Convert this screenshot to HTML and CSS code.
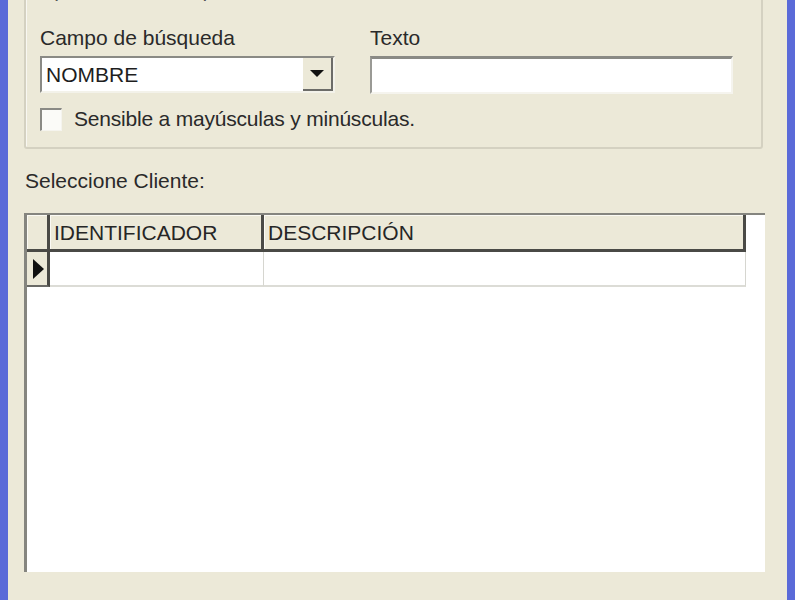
FILE: index.html
```html
<!DOCTYPE html>
<html lang="es">
<head>
    <meta charset="UTF-8">
    <title>Buscar Cliente</title>
    <link rel="stylesheet" href="styles.css">
</head>
<body>
    <div class="window">
        <div class="group-box">
            <div class="group-title">Opciones de búsqueda</div>
            <div class="field-row">
                <div class="field field-combo">
                    <label>Campo de búsqueda</label>
                    <div class="combo">
                        <span class="combo-value">NOMBRE</span>
                        <span class="combo-button"><span class="arrow"></span></span>
                    </div>
                </div>
                <div class="field field-text">
                    <label>Texto</label>
                    <div class="textbox"></div>
                </div>
            </div>
            <div class="check-row">
                <span class="checkbox"></span>
                <span class="check-label">Sensible a mayúsculas y minúsculas.</span>
            </div>
        </div>

        <div class="section-label">Seleccione Cliente:</div>

        <div class="grid-box">
            <div class="grid">
                <div class="cell head corner"></div>
                <div class="cell head">IDENTIFICADOR</div>
                <div class="cell head">DESCRIPCIÓN</div>
                <div class="cell row-head"><span class="pointer"></span></div>
                <div class="cell data"></div>
                <div class="cell data"></div>
            </div>
        </div>
    </div>
</body>
</html>
```

FILE: styles.css
```css
body {
    margin: 0;
    background-color: #ECE9D8;
    font-family: "Liberation Sans", Arial, sans-serif;
    color: #2a2a2a;
}
.window {
    height: 600px;
    box-sizing: border-box;
    border-left: 8px solid #5a6ad8;
    border-right: 8px solid #5a6ad8;
    padding: 0 24px 0 16px;
    background-color: #ECE9D8;
    overflow: hidden;
}
.group-box {
    margin-top: -14px;
    height: 163px;
    box-sizing: border-box;
    border: 2px solid #d4d1c1;
    border-radius: 3px;
    box-shadow: inset 1px 1px 0 #f8f7f1;
    padding: 0 0 0 14px;
    position: relative;
}
.group-title {
    position: absolute;
    top: -10px;
    left: 8px;
    padding: 0 4px;
    font-size: 21px;
    color: #555;
    background-color: #ECE9D8;
}
.field-row {
    display: flex;
    gap: 35px;
    padding-top: 38px;
}
.field label {
    display: block;
    font-size: 21px;
    line-height: 24px;
    height: 30px;
}
.field-combo {
    width: 295px;
}
.field-text {
    width: 363px;
}
.combo {
    display: flex;
    height: 37px;
    box-sizing: border-box;
    background-color: #fff;
    border-top: 2px solid #8a8a85;
    border-left: 2px solid #8a8a85;
    border-right: 2px solid #f3f2ea;
    border-bottom: 2px solid #f3f2ea;
}
.combo-value {
    flex: 1;
    font-size: 21px;
    line-height: 33px;
    padding-left: 4px;
    color: #1e1e1e;
}
.combo-button {
    width: 30px;
    display: flex;
    align-items: center;
    justify-content: center;
    background-color: #ECE9D8;
    border-right: 2px solid #6c6c68;
    border-bottom: 2px solid #6c6c68;
    box-sizing: border-box;
}
.arrow {
    width: 0;
    height: 0;
    border-left: 7px solid transparent;
    border-right: 7px solid transparent;
    border-top: 7px solid #111;
}
.textbox {
    height: 38px;
    box-sizing: border-box;
    background-color: #fff;
    border-top: 3px solid #8a8a85;
    border-left: 2px solid #9a9a95;
    border-right: 2px solid #f5f4ee;
    border-bottom: 2px solid #f5f4ee;
}
.check-row {
    display: flex;
    align-items: center;
    gap: 12px;
    margin-top: 13px;
}
.checkbox {
    width: 22px;
    height: 23px;
    box-sizing: border-box;
    background-color: #fbfbf8;
    border-top: 2px solid #8a8a85;
    border-left: 2px solid #8a8a85;
    border-right: 1px solid #f5f4ee;
    border-bottom: 1px solid #f5f4ee;
}
.check-label {
    font-size: 21px;
    letter-spacing: -0.2px;
}
.section-label {
    font-size: 21px;
    margin-top: 20px;
    height: 44px;
    padding-left: 1px;
}
.grid-box {
    width: 741px;
    height: 359px;
    box-sizing: border-box;
    background-color: #fff;
    border-top: 2px solid #85857f;
    border-left: 3px solid #85857f;
}
.grid {
    display: grid;
    grid-template-columns: 23px 214px 482px;
    grid-template-rows: 37px 35px;
}
.cell {
    box-sizing: border-box;
}
.head {
    background-color: #ECE9D8;
    border-right: 3px solid #4a4a46;
    border-bottom: 3px solid #4a4a46;
    box-shadow: inset 1px 1px 0 #fbfaf4;
    font-size: 21px;
    line-height: 36px;
    padding-left: 4px;
    color: #262626;
}
.corner {
    padding: 0;
}
.row-head {
    background-color: #ECE9D8;
    border-right: 3px solid #4a4a46;
    border-bottom: 2px solid #6a6a66;
    display: flex;
    align-items: center;
    padding-left: 6px;
}
.pointer {
    width: 0;
    height: 0;
    border-top: 10px solid transparent;
    border-bottom: 10px solid transparent;
    border-left: 11px solid #111;
}
.data {
    border-right: 1px solid #d6d6d0;
    border-bottom: 2px solid #dcdcd6;
}
```
